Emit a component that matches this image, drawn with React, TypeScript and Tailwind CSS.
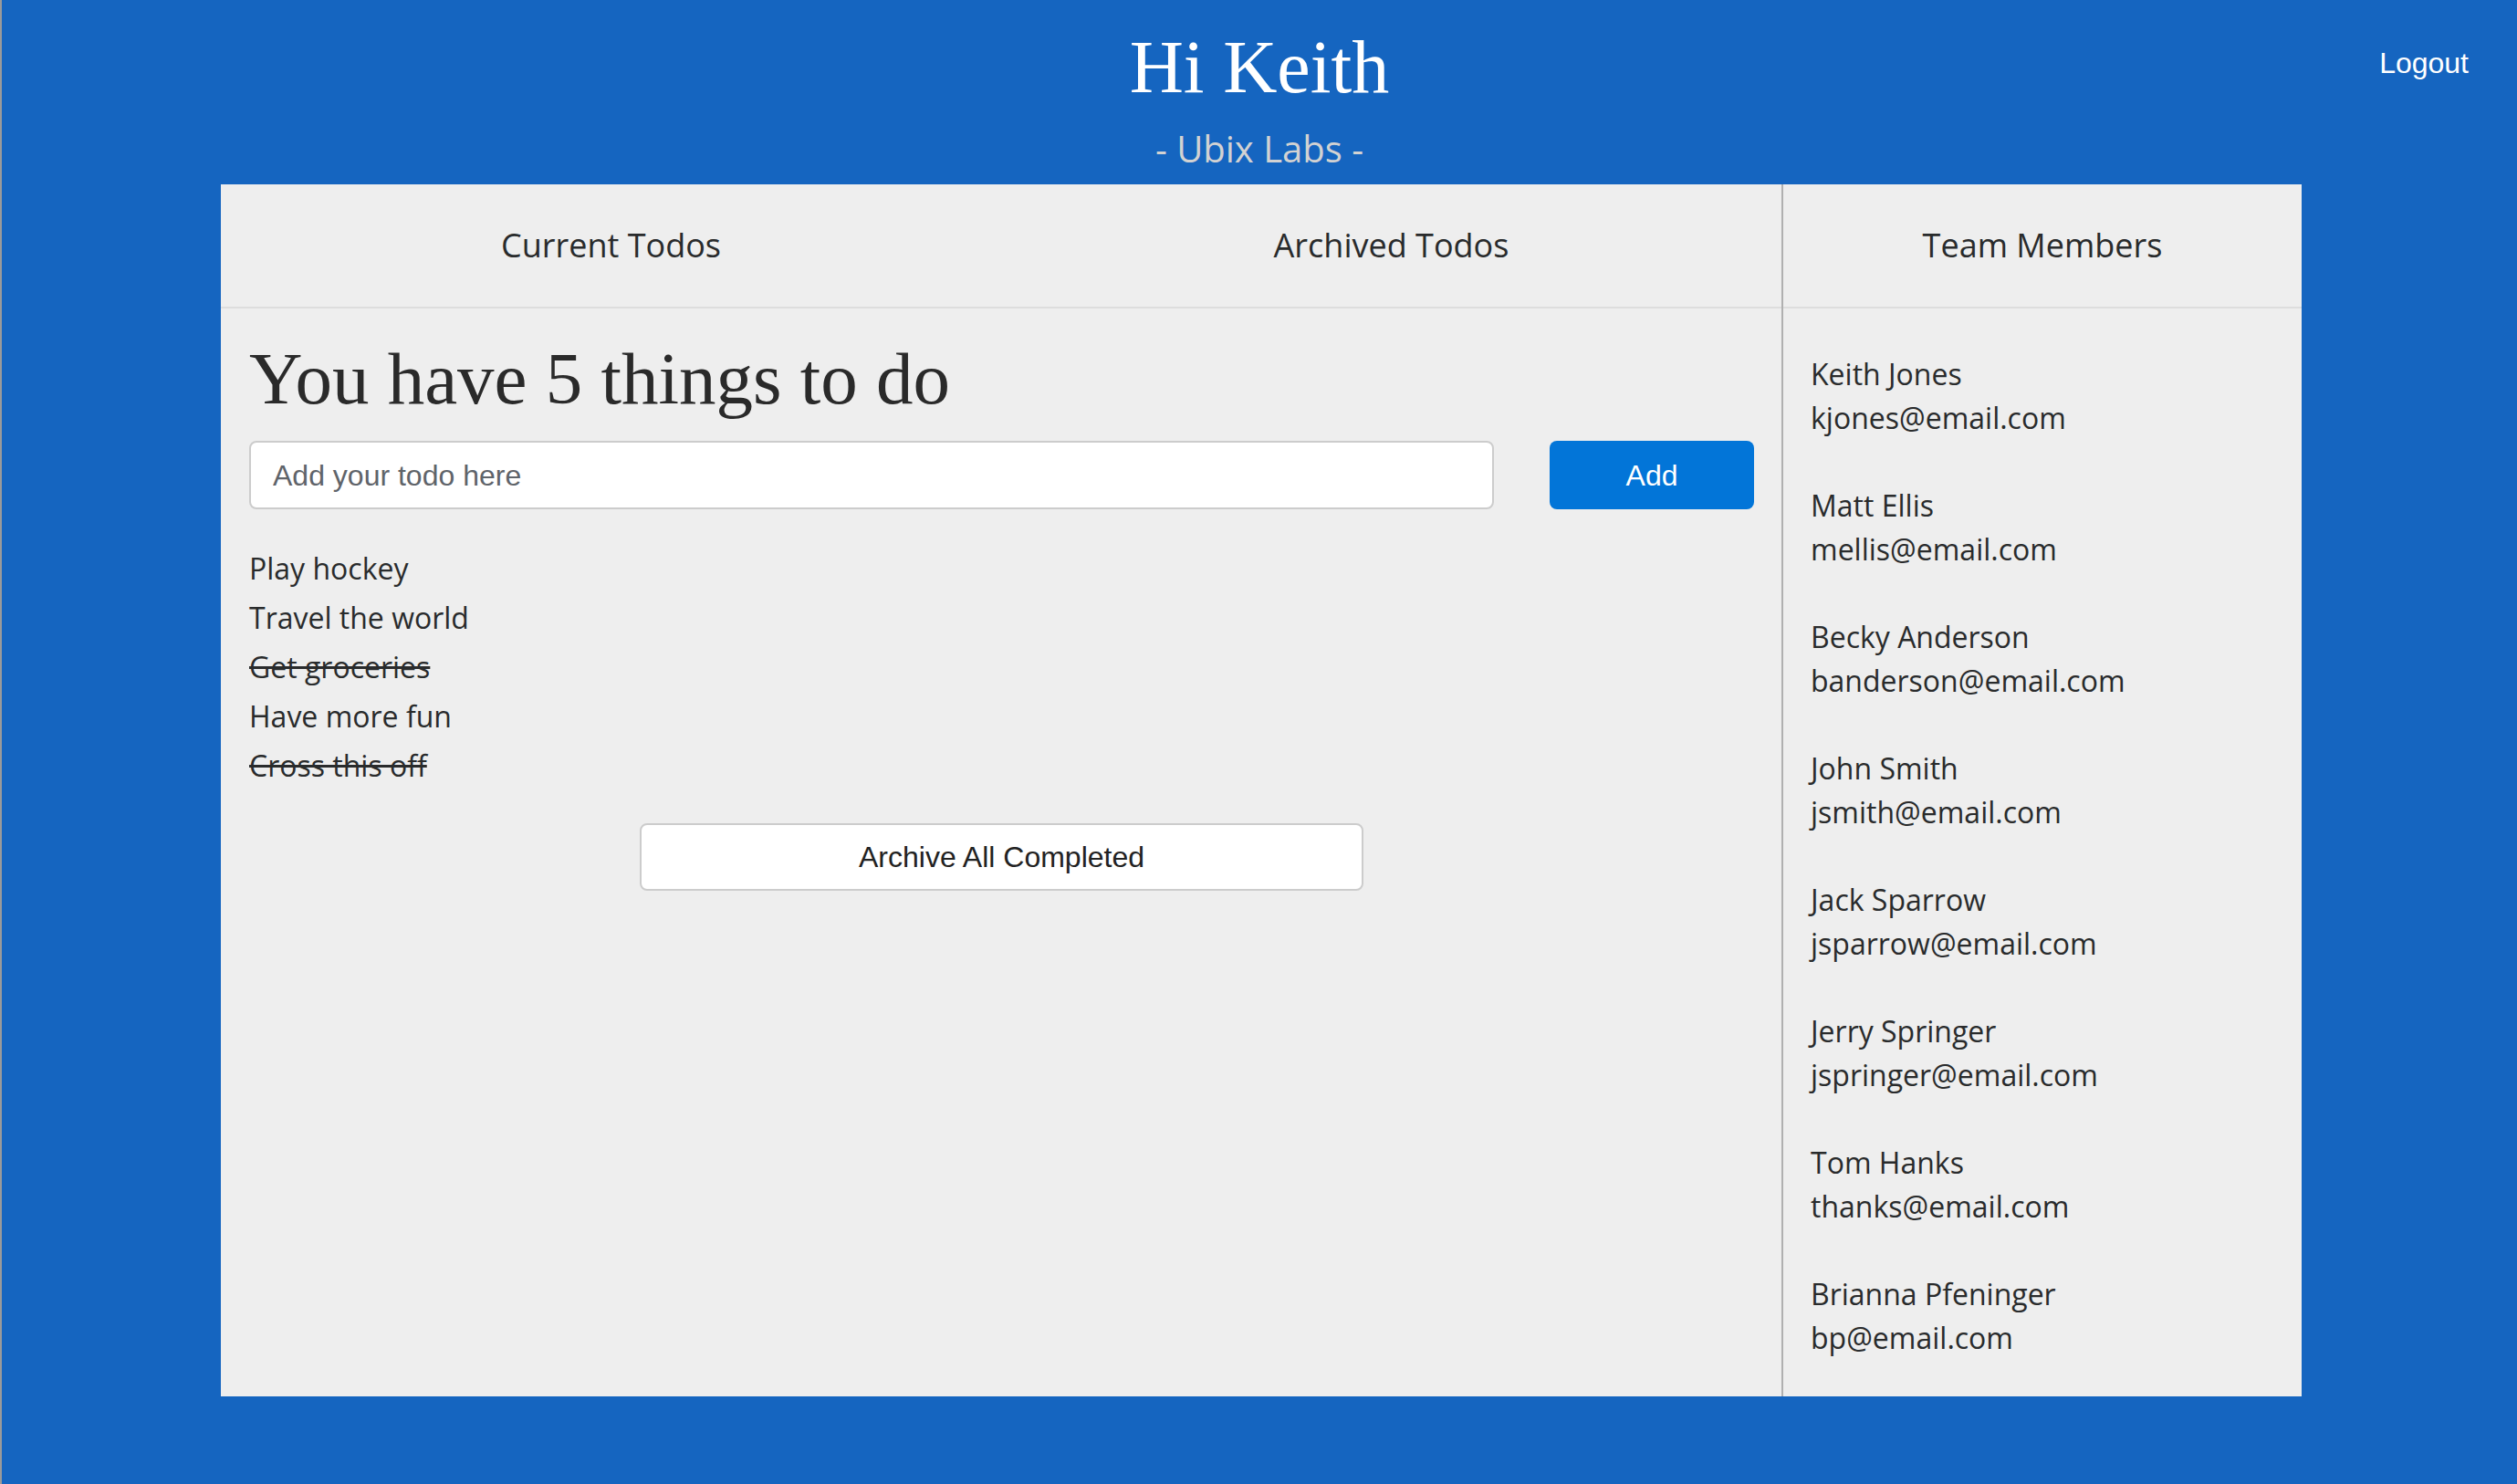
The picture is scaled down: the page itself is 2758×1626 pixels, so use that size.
import React from "react";

const todos = [
  { text: "Play hockey", done: false },
  { text: "Travel the world", done: false },
  { text: "Get groceries", done: true },
  { text: "Have more fun", done: false },
  { text: "Cross this off", done: true },
];

const members = [
  { name: "Keith Jones", email: "kjones@email.com" },
  { name: "Matt Ellis", email: "mellis@email.com" },
  { name: "Becky Anderson", email: "banderson@email.com" },
  { name: "John Smith", email: "jsmith@email.com" },
  { name: "Jack Sparrow", email: "jsparrow@email.com" },
  { name: "Jerry Springer", email: "jspringer@email.com" },
  { name: "Tom Hanks", email: "thanks@email.com" },
  { name: "Brianna Pfeninger", email: "bp@email.com" },
];

const serif = "font-['Liberation_Serif',serif]";
const sans = "font-['Open_Sans',sans-serif]";
const helv = "font-['Liberation_Sans',Arial,sans-serif]";

export default function App() {
  return (
    <div className="min-h-screen bg-[#1565c0] border-l-2 border-[#9a9a9a] pb-[96px]">
      {/* Top header */}
      <header className="grid grid-cols-[1fr_auto_1fr] pt-[33px] pb-[19px]">
        <div />
        <div className="flex flex-col items-center">
          <h1 className={`${serif} text-white text-[82px] leading-[82px]`}>Hi Keith</h1>
          <p className={`${sans} text-[#d2d2d2] text-[40px] leading-[40px] mt-[28px]`}>- Ubix Labs -</p>
        </div>
        <div className="flex justify-end items-start pr-[53px]">
          <a className={`${helv} text-white text-[32px] leading-[32px] mt-[20px] cursor-pointer`}>Logout</a>
        </div>
      </header>

      <div className="pl-[240px]">
        <main className={`${sans} w-[2280px] bg-[#eeeeee] text-[#292b2c] grid grid-cols-[1712px_1fr]`}>
          {/* Todos column */}
          <section className="border-r-2 border-[#b0b0b0]">
            <nav className="grid grid-cols-2 h-[136px] border-b-2 border-[#dddddd] text-[36px]">
              <div className="flex items-center justify-center">Current Todos</div>
              <div className="flex items-center justify-center">Archived Todos</div>
            </nav>
            <div className="pt-[37px] pl-[31px] pr-[30px]">
              <h2 className={`${serif} text-[81px] leading-[81px] text-[#2a2a2a]`}>
                You have {todos.length} things to do
              </h2>
              <div className="flex gap-[61px] mt-[27px]">
                <input
                  placeholder="Add your todo here"
                  className={`${helv} flex-1 h-[75px] bg-white border-2 border-[#cccccc] rounded-[8px] px-[24px] pt-[1px] text-[32px] placeholder:text-[#5f646a] outline-none`}
                />
                <button className={`${helv} w-[224px] h-[75px] rounded-[8px] bg-[#0275d8] text-white text-[32px]`}>
                  Add
                </button>
              </div>
              <ul className="mt-[38px]">
                {todos.map((t) => (
                  <li
                    key={t.text}
                    className={`text-[32px] leading-[54px] ${t.done ? "line-through" : ""}`}
                  >
                    {t.text}
                  </li>
                ))}
              </ul>
              <div className="flex justify-center mt-[36px]">
                <button
                  className={`${helv} w-[793px] h-[74px] bg-white border-2 border-[#cccccc] rounded-[8px] text-[32px] text-[#222]`}
                >
                  Archive All Completed
                </button>
              </div>
            </div>
          </section>

          {/* Team column */}
          <aside>
            <div className="flex items-center justify-center h-[136px] border-b-2 border-[#dddddd] text-[36px]">
              Team Members
            </div>
            <div className="pt-[48px] pb-[40px] pl-[30px] flex flex-col gap-[48px]">
              {members.map((m) => (
                <div key={m.email} className="text-[32px] leading-[48px]">
                  <div>{m.name}</div>
                  <div>{m.email}</div>
                </div>
              ))}
            </div>
          </aside>
        </main>
      </div>
    </div>
  );
}
